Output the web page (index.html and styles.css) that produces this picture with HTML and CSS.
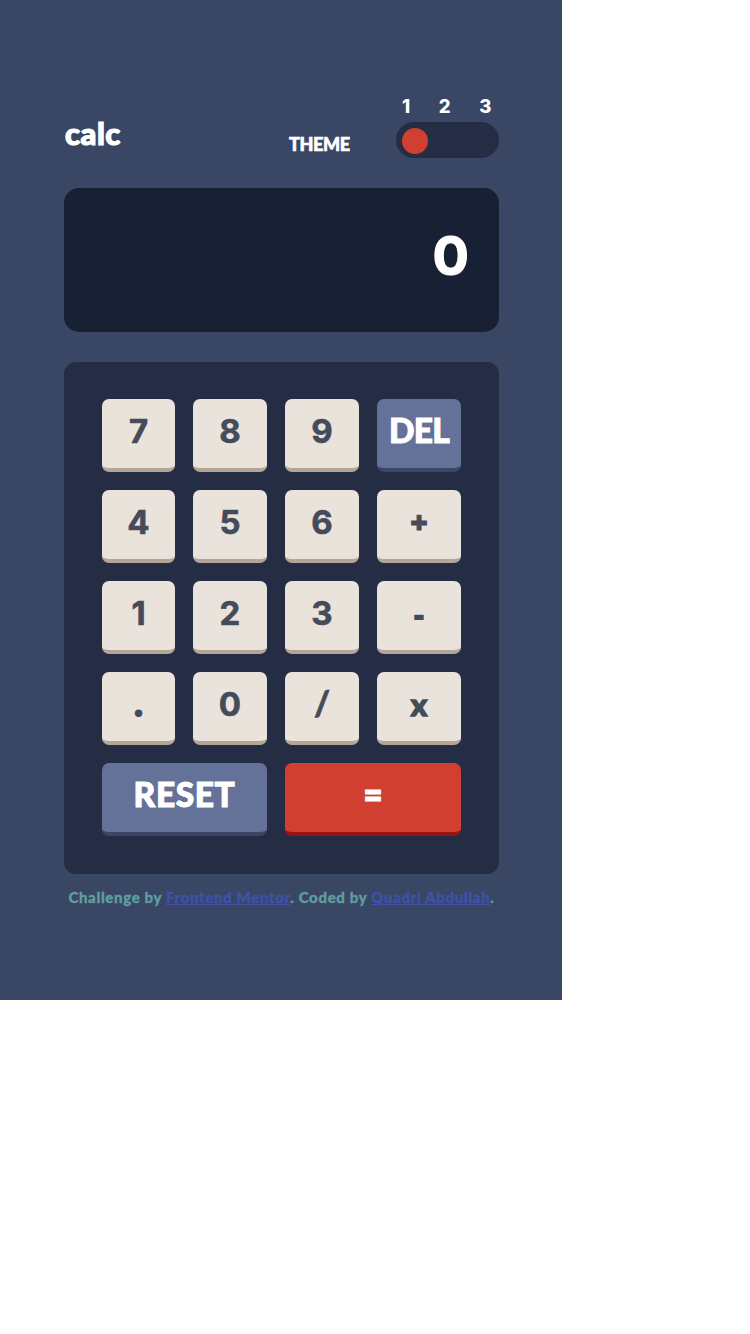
FILE: index.html
```html
<!DOCTYPE html>
<html lang="en">
<head>
<meta charset="utf-8">
<title>Calculator</title>
<link rel="stylesheet" href="styles.css">
</head>
<body>
<main class="page">
  <header class="header">
    <h1 class="logo">calc</h1>
    <span class="theme-label">THEME</span>
    <div class="theme">
      <div class="theme-numbers"><span>1</span><span>2</span><span>3</span></div>
      <div class="toggle"><span class="toggle-knob"></span></div>
    </div>
  </header>
  <section class="display"><span class="display-value">0</span></section>
  <section class="keypad">
    <button class="key"><span class="digit">7</span></button>
    <button class="key"><span class="digit">8</span></button>
    <button class="key"><span class="digit">9</span></button>
    <button class="key key-blue"><span class="del">DEL</span></button>
    <button class="key"><span class="digit">4</span></button>
    <button class="key"><span class="digit">5</span></button>
    <button class="key"><span class="digit">6</span></button>
    <button class="key"><span class="plus">+</span></button>
    <button class="key"><span class="digit">1</span></button>
    <button class="key"><span class="digit">2</span></button>
    <button class="key"><span class="digit">3</span></button>
    <button class="key"><span class="minus">-</span></button>
    <button class="key"><span class="dot">.</span></button>
    <button class="key"><span class="digit">0</span></button>
    <button class="key"><span class="slash">/</span></button>
    <button class="key"><span class="times">x</span></button>
    <button class="key key-blue key-wide"><span class="reset">RESET</span></button>
    <button class="key key-red key-wide"><span class="equals">=</span></button>
  </section>
  <footer class="footer">Challenge by <a class="link" href="#">Frontend Mentor</a>. Coded by <a class="link" href="#">Quadri Abdullah</a>.</footer>
</main>
</body>
</html>
```
FILE: styles.css
```css
* { box-sizing: border-box; }
body { margin: 0; background: #fff; font-family: Lato, sans-serif; font-weight: 900; }
.page { width: 562px; height: 1000px; padding: 97px 63px 0 64px; background: #3a4764; color: #fff; }
.header { display: flex; height: 61px; align-items: flex-end; }
.logo { margin: 0; width: 225px; font-size: 31px; font-weight: 900; line-height: 40px; padding-bottom: 5px; -webkit-text-stroke: 1.2px; letter-spacing: 0.5px; padding-left: 1px; }
.theme-label { width: 107px; font-size: 18px; line-height: 20px; padding-bottom: 4px; letter-spacing: -0.4px; white-space: nowrap; -webkit-text-stroke: 0.6px; }
.theme { width: 103px; }
.theme-numbers { display: flex; justify-content: space-between; padding: 0 8px 0 6px; font: 800 18.5px/19px Inter, sans-serif; letter-spacing: -0.4px; margin-bottom: 6px; }
.toggle { display: flex; align-items: center; height: 36px; padding: 2px 6px 0; border-radius: 18px; background: #242d44; }
.toggle-knob { width: 26px; height: 26px; border-radius: 50%; background: #d03f2f; }
.display { display: flex; justify-content: flex-end; height: 144px; margin-top: 30px; padding: 33px 31px 0; border-radius: 15px; background: #182034; }
.display-value { font-family: Inter, sans-serif; font-weight: 700; font-size: 54px; line-height: 70px; -webkit-text-stroke: 1.2px; letter-spacing: -1px; }
.keypad { display: grid; grid-template-columns: 73px 74px 74px 84px; grid-auto-rows: 73px; gap: 18px; height: 512px; margin-top: 30px; padding: 37px 38px; border-radius: 12px; background: #242d44; }
.key { display: flex; justify-content: center; padding: 9px 0 0; border: 0; border-bottom: 4px solid #b4a597; border-radius: 7px; background: #eae3dc; color: #444b5a; font: 900 34px/44px Lato, sans-serif; }
.key-blue { background: #647198; border-color: #3a4764; color: #fff; }
.key-red { background: #d03f2f; border-color: #981413; color: #fff; }
.key-wide { grid-column: span 2; }
.digit { font-family: Inter, sans-serif; font-weight: 700; font-size: 33px; line-height: 46px; -webkit-text-stroke: 0.6px; }
.del { letter-spacing: -0.8px; font-size: 33.5px; line-height: 45px; -webkit-text-stroke: 1px; }
.reset { letter-spacing: 0.6px; font-size: 33.5px; line-height: 45px; -webkit-text-stroke: 1px; }
.dot { -webkit-text-stroke: 2px; }
.slash { -webkit-text-stroke: 0.7px; }
.times { font-size: 31px; line-height: 47px; -webkit-text-stroke: 1.4px; }
.plus, .equals { font-family: "Open Sans", sans-serif; font-weight: 800; font-size: 30px; line-height: 46px; -webkit-text-stroke: 1px; }
.minus { font-family: "Open Sans", sans-serif; font-weight: 800; line-height: 46px; }
.footer { margin-top: 13px; text-align: center; white-space: nowrap; font-size: 15px; line-height: 20px; letter-spacing: 0.65px; color: #5f9ea0; -webkit-text-stroke: 0.3px; }
.link { color: #3f51a8; text-decoration: underline; text-underline-offset: 1px; text-decoration-thickness: 1px; }
```
